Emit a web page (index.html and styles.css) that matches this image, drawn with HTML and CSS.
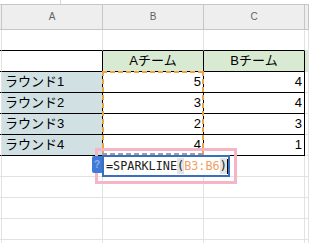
FILE: index.html
```html
<!DOCTYPE html>
<html lang="ja">
<head>
<meta charset="utf-8">
<link rel="stylesheet" href="styles.css">
</head>
<body>
<div class="sheet">
  <div class="topbar"><span class="tick"></span></div>
  <div class="grid">
    <div class="c hd"></div><div class="c hd">A</div><div class="c hd">B</div><div class="c hd">C</div><div class="c hd"></div>

    <div class="c bb"></div><div class="c bb"></div><div class="c bb"></div><div class="c bb"></div><div class="c"></div>

    <div class="c bb"></div><div class="c bb br"></div><div class="c bb br green ctr">Aチーム</div><div class="c bb br green ctr">Bチーム</div><div class="c green"></div>

    <div class="c bb"></div><div class="c bb br blue lbl">ラウンド1</div><div class="c bb br num">5</div><div class="c bb br num">4</div><div class="c"></div>
    <div class="c bb"></div><div class="c bb br blue lbl">ラウンド2</div><div class="c bb br num">3</div><div class="c bb br num">4</div><div class="c"></div>
    <div class="c bb"></div><div class="c bb br blue lbl">ラウンド3</div><div class="c bb br num">2</div><div class="c bb br num">3</div><div class="c"></div>
    <div class="c bb"></div><div class="c bb br blue lbl">ラウンド4</div><div class="c bb br num">4</div><div class="c bb br num">1</div><div class="c"></div>

    <div class="c"></div><div class="c"></div><div class="c"></div><div class="c"></div><div class="c"></div>
    <div class="c"></div><div class="c"></div><div class="c"></div><div class="c"></div><div class="c"></div>
    <div class="c"></div><div class="c"></div><div class="c"></div><div class="c"></div><div class="c"></div>
    <div class="c"></div><div class="c"></div><div class="c"></div><div class="c"></div><div class="c"></div>
    <div class="c"></div><div class="c"></div><div class="c"></div><div class="c"></div><div class="c"></div>
  </div>

  <svg class="range" width="102" height="84" viewBox="0 0 102 84">
    <line x1="0" y1="1" x2="102" y2="1" class="dash"/>
    <line x1="1" y1="0" x2="1" y2="84" class="dash"/>
    <line x1="101" y1="0" x2="101" y2="84" class="dash"/>
    <line x1="0" y1="83" x2="102" y2="83" class="dash gray"/>
  </svg>

  <div class="pink"></div>
  <div class="tag">?</div>
  <div class="editor"><span class="fx">=SPARKLINE</span><span class="par">(</span><span class="ref">B3:B6</span><span class="par">)</span><span class="caret"></span></div>
</div>
</body>
</html>
```

FILE: styles.css
```css
html, body {
  margin: 0;
  padding: 0;
  background: #ffffff;
}

.sheet {
  position: relative;
  width: 309px;
  height: 243px;
  overflow: hidden;
  font-family: "Liberation Sans", "Noto Sans CJK JP", sans-serif;
  font-size: 13px;
  color: #000000;
}

.topbar {
  position: relative;
  height: 4px;
  border-bottom: 1px solid #c7c7c7;
}

.tick {
  position: absolute;
  left: 60px;
  top: 0;
  width: 1px;
  height: 4px;
  background: #d6d6d6;
}

.grid {
  display: grid;
  grid-template-columns: 2px 101px 101px 101px 1fr;
  grid-template-rows: 25px repeat(11, 21px);
}

.c {
  box-sizing: border-box;
  border-right: 1px solid #e2e2e2;
  border-bottom: 1px solid #e2e2e2;
  line-height: 20px;
  white-space: nowrap;
  overflow: hidden;
}

.hd {
  background: #eeeeee;
  border-right-color: #c6c6c6;
  border-bottom-color: #c6c6c6;
  color: #5f6368;
  font-size: 10px;
  line-height: 24px;
  text-align: center;
}

.bb {
  border-bottom-color: #000000;
}

.br {
  border-right-color: #000000;
}

.green {
  background: #d9ead3;
}

.blue {
  background: #d0e0e3;
}

.ctr {
  text-align: center;
}

.lbl {
  padding-left: 3px;
}

.num {
  text-align: right;
  padding-right: 2px;
}

.range {
  position: absolute;
  left: 102px;
  top: 71px;
}

.dash {
  stroke: #f0a23e;
  stroke-width: 2;
  stroke-dasharray: 5 3;
}

.gray {
  stroke: #9e9e9e;
}

.pink {
  position: absolute;
  left: 95px;
  top: 148px;
  width: 142px;
  height: 36px;
  box-sizing: border-box;
  border: 3px solid #f5b5c9;
}

.tag {
  position: absolute;
  left: 92px;
  top: 156px;
  width: 10px;
  height: 17px;
  background: #3f7bd6;
  border-radius: 2px 0 0 2px;
  color: #8fb0e8;
  font-size: 10px;
  font-weight: bold;
  line-height: 17px;
  text-align: center;
}

.editor {
  position: absolute;
  left: 102px;
  top: 155px;
  width: 128px;
  height: 22px;
  box-sizing: border-box;
  border: 2px solid #3a6fc0;
  background: #ffffff;
  padding-left: 2px;
  display: flex;
  align-items: center;
  font-family: "DejaVu Sans Mono", monospace;
  font-size: 11.8px;
  line-height: 16px;
  color: #222222;
  white-space: nowrap;
}

.par {
  background: #e3e3e3;
}

.ref {
  color: #f0a064;
}

.caret {
  width: 1px;
  height: 15px;
  background: #000000;
}
```
